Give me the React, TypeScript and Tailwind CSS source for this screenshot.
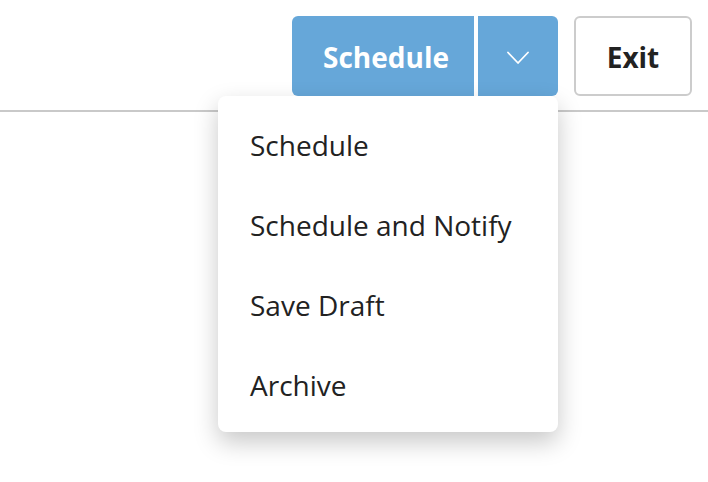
import { useState } from 'react'

const MENU_ITEMS = ['Schedule', 'Schedule and Notify', 'Save Draft', 'Archive']

function Chevron() {
  return (
    <svg width="24" height="14" viewBox="0 0 24 14" fill="none">
      <path d="M2 1.5 L12 12 L22 1.5" stroke="white" strokeWidth="1.8" strokeLinecap="round" strokeLinejoin="round" />
    </svg>
  )
}

export default function App() {
  const [open, setOpen] = useState(true)

  return (
    <div className="min-h-[482px] bg-white" style={{ fontFamily: '"Open Sans", sans-serif' }}>
      {/* Header */}
      <div className="flex justify-end items-start h-[112px] pt-4 pr-4 border-b-2 border-[#c9c9c9]">
        <div className="relative flex gap-1">
          <button className="w-[182px] h-20 pt-[2px] pl-[6px] rounded-l-md bg-[#66a7d9] text-white text-[28px] font-bold">
            Schedule
          </button>
          <button
            className="w-20 h-20 pt-[3px] rounded-r-md bg-[#66a7d9] flex items-center justify-center"
            onClick={() => setOpen(!open)}
          >
            <Chevron />
          </button>

          {open && (
            <div className="absolute top-full right-0 w-[340px] py-2 bg-white rounded-lg shadow-[0_10px_24px_rgba(0,0,0,0.22)] z-10">
              {MENU_ITEMS.map((item) => (
                <div key={item} className="h-20 pt-[2px] flex items-center pl-8 text-[28px] text-[#222]">
                  {item}
                </div>
              ))}
            </div>
          )}
        </div>
        <button className="ml-4 w-[118px] h-20 pt-[2px] rounded-md border-2 border-[#cccccc] bg-white text-[#222] text-[28px] font-bold">
          Exit
        </button>
      </div>
    </div>
  )
}
